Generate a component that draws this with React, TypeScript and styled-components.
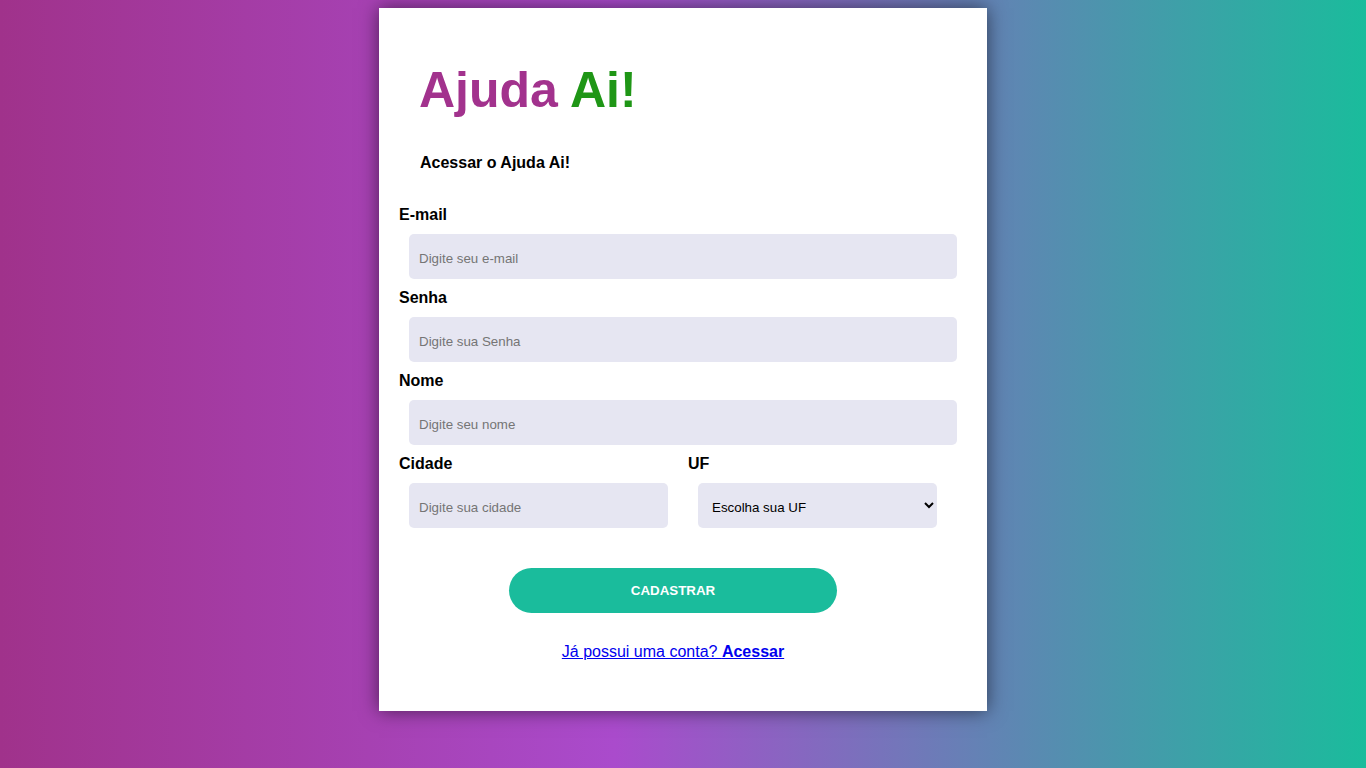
import React from "react";
import styled, { createGlobalStyle } from "styled-components";

const GlobalStyle = createGlobalStyle`
  html, body {
    margin: 0;
    padding: 0;
  }
  body {
    min-height: 100vh;
    background: linear-gradient(90deg, #a0328b 0%, #aa4bcc 45%, #1abc9c 100%);
    font-family: "Liberation Sans", Arial, sans-serif;
  }
`;

const Page = styled.div`
  display: flex;
  justify-content: center;
  padding-top: 8px;
  min-height: 100vh;
  box-sizing: border-box;
`;

const Card = styled.main`
  width: 608px;
  height: 703px;
  box-sizing: border-box;
  background: #ffffff;
  padding: 0 40px 50px 20px;
  box-shadow: 0 0 18px rgba(0, 0, 0, 0.55);
  align-self: flex-start;
`;

const Title = styled.h1`
  margin: 54px 0 0 20px;
  font-size: 50px;
  line-height: 57px;
  font-weight: 700;
  color: #a2328d;
`;

const Accent = styled.span`
  color: #1f9616;
`;

const Subtitle = styled.h2`
  margin: 35px 0 0 21px;
  font-size: 16px;
  line-height: 18px;
  font-weight: 700;
  color: #000;
`;

const Form = styled.form`
  display: flex;
  flex-direction: column;
  width: 548px;
  margin-top: 34px;
`;

const Field = styled.div<{ $width?: number }>`
  display: flex;
  flex-direction: column;
  width: ${(p) => (p.$width ? `${p.$width}px` : "100%")};
`;

const Label = styled.label`
  font-size: 16px;
  line-height: 18px;
  font-weight: 700;
  color: #000;
  margin-bottom: 10px;
`;

const Input = styled.input`
  box-sizing: border-box;
  width: 100%;
  height: 45px;
  margin: 0 0 10px 10px;
  padding: 4px 10px 0;
  border: none;
  border-radius: 5px;
  background: #e6e6f2;
  font-family: "Liberation Sans", Arial, sans-serif;
  font-size: 13.333px;
  color: #000;
  outline: none;
  &::placeholder {
    color: #757575;
  }
`;

const Select = styled.select`
  box-sizing: border-box;
  width: calc(100% - 20px);
  height: 45px;
  margin: 0 0 10px 10px;
  padding: 4px 8px 0 10px;
  border: none;
  border-radius: 5px;
  background: #e6e6f2;
  font-family: "Liberation Sans", Arial, sans-serif;
  font-size: 13.333px;
  color: #000;
  outline: none;
`;

const Row = styled.div`
  display: flex;
  gap: 30px;
`;

const Button = styled.button`
  align-self: center;
  width: 328px;
  height: 45px;
  margin-top: 30px;
  border: none;
  border-radius: 23px;
  background: #1abc9c;
  color: #ffffff;
  font-family: "Liberation Sans", Arial, sans-serif;
  font-size: 13.333px;
  font-weight: 700;
  cursor: pointer;
`;

const Footer = styled.p`
  margin: 30px 0 0;
  text-align: center;
  font-size: 16px;
  line-height: 18px;
`;

const Link = styled.a`
  color: #0000ee;
  text-decoration: underline;
`;

const Strong = styled.strong`
  font-weight: 700;
`;

export default function App() {
  return (
    <>
      <GlobalStyle />
      <Page>
        <Card>
          <Title>
            Ajuda <Accent>Ai!</Accent>
          </Title>
          <Subtitle>Acessar o Ajuda Ai!</Subtitle>
          <Form onSubmit={(e) => e.preventDefault()}>
            <Field>
              <Label htmlFor="email">E-mail</Label>
              <Input id="email" type="email" placeholder="Digite seu e-mail" />
            </Field>
            <Field>
              <Label htmlFor="senha">Senha</Label>
              <Input id="senha" type="password" placeholder="Digite sua Senha" />
            </Field>
            <Field>
              <Label htmlFor="nome">Nome</Label>
              <Input id="nome" type="text" placeholder="Digite seu nome" />
            </Field>
            <Row>
              <Field $width={259}>
                <Label htmlFor="cidade">Cidade</Label>
                <Input id="cidade" type="text" placeholder="Digite sua cidade" />
              </Field>
              <Field $width={259}>
                <Label htmlFor="uf">UF</Label>
                <Select id="uf" defaultValue="">
                  <option value="" disabled>
                    Escolha sua UF
                  </option>
                  <option value="SP">SP</option>
                  <option value="RJ">RJ</option>
                  <option value="MG">MG</option>
                </Select>
              </Field>
            </Row>
            <Button type="submit">CADASTRAR</Button>
            <Footer>
              <Link href="#">
                Já possui uma conta? <Strong>Acessar</Strong>
              </Link>
            </Footer>
          </Form>
        </Card>
      </Page>
    </>
  );
}
